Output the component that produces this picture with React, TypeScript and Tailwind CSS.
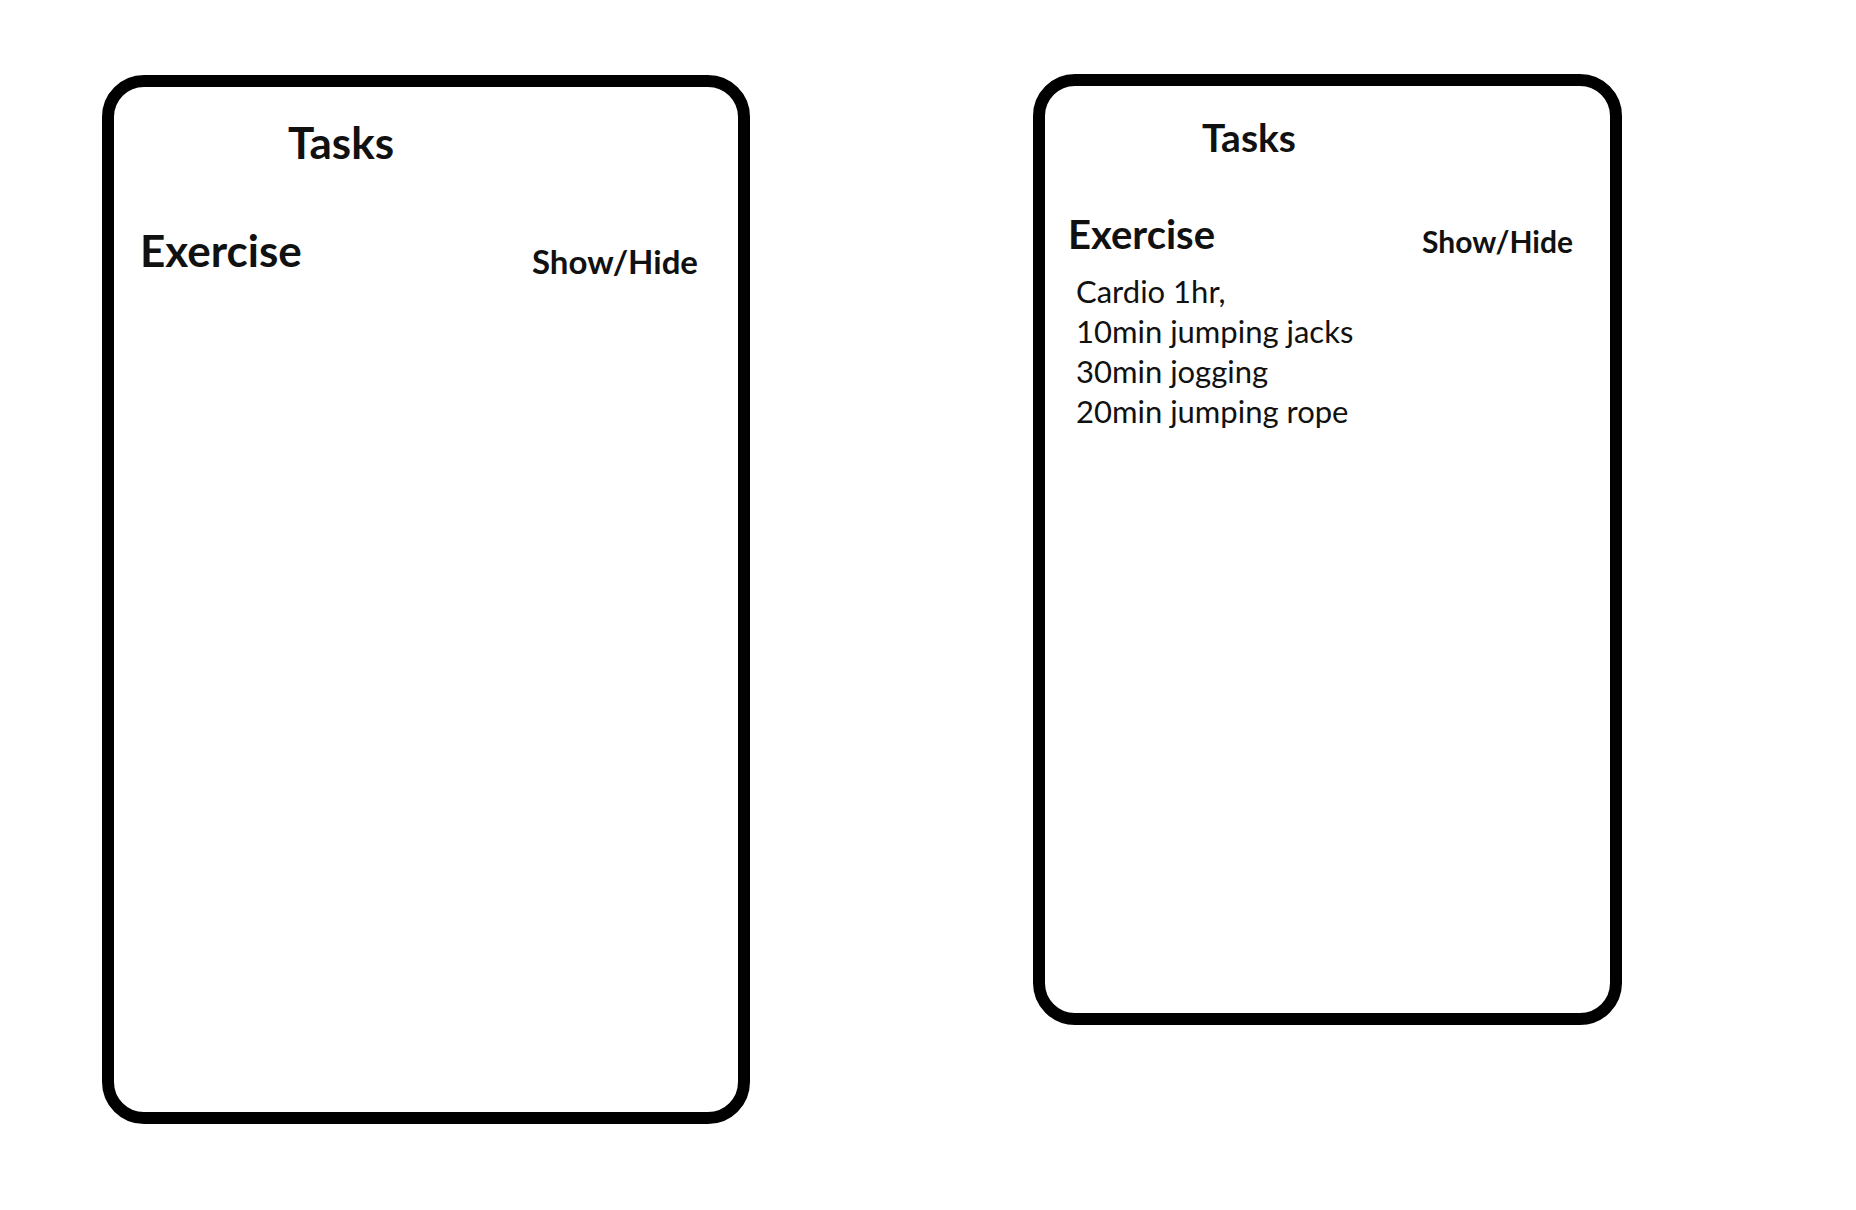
import React from "react";

export default function App() {
  return (
    <div
      className="min-h-[1210px] w-[1856px] bg-white text-[#111]"
      style={{ fontFamily: "Lato, 'Open Sans', sans-serif" }}
    >
      <div className="flex items-start pl-[102px] pt-[74px] gap-[283px]">
        {/* Left card: collapsed */}
        <div className="mt-[1px] w-[648px] h-[1049px] border-[12px] border-black rounded-[42px] flex flex-col">
          <div className="pl-[174px] pt-[33px] text-[44px] font-bold leading-none">
            Tasks
          </div>
          <div className="flex justify-between items-start pl-[26px] pr-[40px] mt-[64px]">
            <div className="text-[44px] font-bold leading-none">Exercise</div>
            <div className="mt-[17px] text-[33px] font-bold leading-none">
              Show/Hide
            </div>
          </div>
        </div>

        {/* Right card: expanded */}
        <div className="w-[589px] h-[951px] border-[12px] border-black rounded-[42px] flex flex-col">
          <div className="pl-[157px] pt-[32px] text-[39px] font-bold leading-none">
            Tasks
          </div>
          <div className="flex justify-between items-start pl-[23px] pr-[37px] mt-[57px]">
            <div className="text-[40px] font-bold leading-none">Exercise</div>
            <div className="mt-[12px] text-[30px] font-bold leading-none">
              Show/Hide
            </div>
          </div>
          <div className="pl-[31px] mt-[15px] flex flex-col text-[31px] leading-[40px]">
            <span>Cardio 1hr,</span>
            <span>10min jumping jacks</span>
            <span>30min jogging</span>
            <span>20min jumping rope</span>
          </div>
        </div>
      </div>
    </div>
  );
}
